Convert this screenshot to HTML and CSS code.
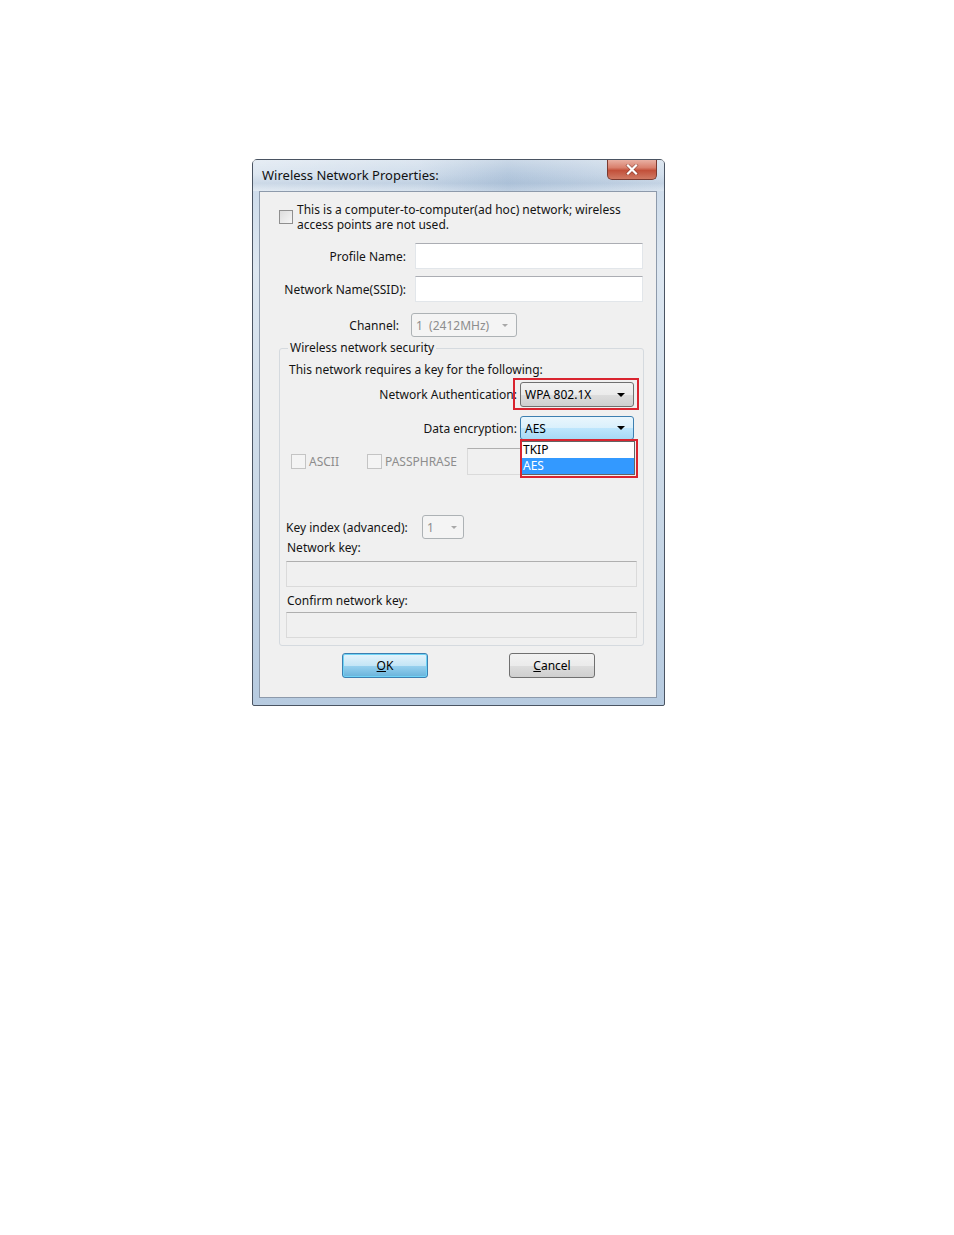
FILE: index.html
```html
<!DOCTYPE html>
<html>

<head>
    <link rel="stylesheet" href="styles.css">
</head>

<body>
    <div class="dialog">
        <!-- Title bar -->
        <div class="titlebar">
            <span class="title">Wireless Network Properties:</span>
            <div class="close-btn">
                <svg width="14" height="11" viewBox="0 0 14 11">
                    <path d="M3 1.5 L11 9.5 M11 1.5 L3 9.5" stroke="#5a2018" stroke-width="3.6" stroke-linecap="square" opacity="0.45" />
                    <path d="M3 1.5 L11 9.5 M11 1.5 L3 9.5" stroke="#fff" stroke-width="2.2" stroke-linecap="square" />
                </svg>
            </div>
        </div>

        <div class="client">
            <div class="adhoc-row">
                <span class="checkbox"></span>
                <span class="adhoc-text">This is a computer-to-computer(ad hoc) network; wireless<br>access points are not used.</span>
            </div>

            <div class="field-row profile-row">
                <label class="field-label">Profile Name:</label>
                <input type="text" class="text-input">
            </div>

            <div class="field-row ssid-row">
                <label class="field-label">Network Name(SSID):</label>
                <input type="text" class="text-input">
            </div>

            <div class="channel-row">
                <label class="channel-label">Channel:</label>
                <div class="combo disabled channel-combo">
                    <span>1 &nbsp;(2412MHz)</span>
                    <span class="arrow"></span>
                </div>
            </div>

            <!-- Security group -->
            <fieldset class="security">
                <legend>Wireless network security</legend>
                <div class="requires">This network requires a key for the following:</div>

                <div class="pick-row auth-row">
                    <label>Network Authentication:</label>
                    <div class="combo auth-combo marked">
                        <span>WPA 802.1X</span>
                        <span class="arrow"></span>
                    </div>
                </div>

                <div class="pick-row enc-row">
                    <label>Data encryption:</label>
                    <div class="combo focused enc-combo">
                        <span>AES</span>
                        <span class="arrow"></span>
                        <!-- open list -->
                        <div class="droplist">
                            <div class="option">TKIP</div>
                            <div class="option selected">AES</div>
                        </div>
                    </div>
                </div>

                <div class="key-type-row">
                    <span class="checkbox dim"></span>
                    <span class="dim-label">ASCII</span>
                    <span class="checkbox dim pass-box"></span>
                    <span class="dim-label">PASSPHRASE</span>
                    <input type="text" class="text-input disabled pass-input" disabled>
                </div>

                <div class="keyindex-row">
                    <label>Key index (advanced):</label>
                    <div class="combo disabled keyindex-combo">
                        <span>1</span>
                        <span class="arrow"></span>
                    </div>
                </div>

                <div class="key-label">Network key:</div>
                <input type="text" class="text-input disabled wide-input" disabled>

                <div class="key-label confirm-label">Confirm network key:</div>
                <input type="text" class="text-input disabled wide-input confirm-input" disabled>
            </fieldset>

            <div class="buttons">
                <div class="button default"><u>O</u>K</div>
                <div class="button"><u>C</u>ancel</div>
            </div>
        </div>
    </div>
</body>

</html>
```
FILE: styles.css
```css
body {
    margin: 0;
    padding: 159px 0 0 252px;
    background-color: #fff;
    font-family: "Noto Sans", "Open Sans", sans-serif;
    font-size: 12px;
    color: #141414;
}

.dialog {
    width: 411px;
    height: 545px;
    border: 1px solid #4a5462;
    border-radius: 5px 5px 2px 2px;
    background: linear-gradient(180deg, #c9d8e8 0%, #dde7f1 20%, #cbd9e7 60%, #b7cbe0 100%);
    box-sizing: content-box;
    display: flex;
    flex-direction: column;
}

.titlebar {
    height: 31px;
    display: flex;
    align-items: flex-start;
    justify-content: space-between;
    background:
        linear-gradient(180deg, rgba(255, 255, 255, 0.3) 0%, rgba(255, 255, 255, 0) 45%, rgba(120, 150, 185, 0.18) 75%, rgba(255, 255, 255, 0.1) 100%),
        linear-gradient(90deg, rgba(255, 255, 255, 0.35) 0%, rgba(255, 255, 255, 0.1) 40%, rgba(140, 168, 200, 0.35) 62%, rgba(255, 255, 255, 0.15) 100%);
}

.title {
    margin: 6px 0 0 9px;
    font-size: 13px;
    color: #111;
}

.close-btn {
    width: 48px;
    height: 19px;
    margin-right: 7px;
    border: 1px solid #7a3a30;
    border-top: none;
    border-radius: 0 0 5px 5px;
    background: linear-gradient(180deg, #e9b0a3 0%, #d9806d 40%, #c2503a 55%, #d07a64 100%);
    display: flex;
    align-items: center;
    justify-content: center;
}

.client {
    margin: 0 7px 0 6px;
    height: 507px;
    border: 1px solid #8d9aab;
    background-color: #f0f0f0;
    padding-top: 10px;
    box-sizing: border-box;
}

/* checkbox look */
.checkbox {
    display: inline-block;
    width: 12px;
    height: 12px;
    border: 1px solid #8f8f8f;
    background: linear-gradient(135deg, #dcdcdc 0%, #f6f6f6 100%);
    flex-shrink: 0;
}

.checkbox.dim {
    width: 13px;
    height: 13px;
    border-color: #c4c4c4;
    background: #f4f4f4;
}

.adhoc-row {
    display: flex;
    align-items: center;
    padding-left: 19px;
    height: 30px;
}

.adhoc-text {
    margin-left: 4px;
    line-height: 15px;
}

.field-row {
    display: flex;
    align-items: center;
    height: 26px;
}

.profile-row {
    margin-top: 11px;
}

.ssid-row {
    margin-top: 7px;
}

.field-label {
    width: 146px;
    text-align: right;
    margin-right: 9px;
}

.text-input {
    width: 228px;
    height: 26px;
    box-sizing: border-box;
    border: 1px solid #e2e6ea;
    border-top-color: #abadb3;
    background: #fff;
    margin: 0;
    padding: 0;
}

.text-input.disabled {
    background: #f0f0f0;
    border-color: #dadada;
    border-top-color: #afafaf;
}

.channel-row {
    display: flex;
    align-items: center;
    margin-top: 11px;
    height: 24px;
}

.channel-label {
    width: 139px;
    text-align: right;
    margin-right: 12px;
}

/* combo boxes */
.combo {
    position: relative;
    height: 24px;
    box-sizing: border-box;
    border: 1px solid #707070;
    border-radius: 3px;
    background: linear-gradient(180deg, #f2f2f2 0%, #ebebeb 50%, #dddddd 51%, #cfcfcf 100%);
    display: flex;
    align-items: center;
    justify-content: space-between;
    padding: 0 8px 0 4px;
    color: #000;
}

.combo .arrow {
    width: 0;
    height: 0;
    border-left: 4px solid transparent;
    border-right: 4px solid transparent;
    border-top: 4px solid #000;
}

.combo.disabled {
    border-color: #adb2b5;
    background: #f4f4f4;
    color: #8d8d8d;
}

.combo.disabled .arrow {
    border-top-color: #a8a8a8;
    border-left-width: 3px;
    border-right-width: 3px;
    border-top-width: 3px;
}

.combo.focused {
    border-color: #3c7fb1;
    background: linear-gradient(180deg, #eaf6fd 0%, #d9f0fc 50%, #bee6fd 51%, #a7d9f5 100%);
}

.channel-combo {
    width: 106px;
}

.security {
    margin: 3px 12px 0 19px;
    padding: 0 6px 7px 6px;
    border: 1px solid #d5dadf;
    border-radius: 3px;
}

.security legend {
    margin-left: 2px;
    padding: 0 2px;
    line-height: 16px;
}

.requires {
    margin: 6px 0 0 3px;
    line-height: 15px;
}

.pick-row {
    display: flex;
    align-items: center;
    justify-content: flex-end;
    margin-right: 3px;
}

.pick-row label {
    margin-right: 3px;
}

.auth-row {
    margin-top: 5px;
}

.auth-combo {
    width: 114px;
    height: 25px;
}

.enc-row {
    margin-top: 9px;
    position: relative;
    z-index: 2;
}

.enc-combo {
    width: 114px;
}

/* red annotation boxes drawn over the controls */
.marked::after {
    content: "";
    position: absolute;
    left: -8px;
    top: -5px;
    right: -6px;
    bottom: -4px;
    border: 2px solid #d9242f;
}

.droplist {
    position: absolute;
    left: 0;
    top: 24px;
    width: 114px;
    border: 1px solid #646464;
    background: #fff;
    box-sizing: border-box;
}

.droplist::after {
    content: "";
    position: absolute;
    left: -2px;
    top: -3px;
    right: -4px;
    bottom: -4px;
    border: 2px solid #d9242f;
}

.option {
    height: 16px;
    line-height: 16px;
    padding-left: 1px;
    color: #000;
}

.option.selected {
    background: #3399ff;
    color: #fff;
}

.key-type-row {
    display: flex;
    align-items: center;
    height: 27px;
    margin: 8px 0 0 5px;
}

.dim-label {
    color: #8d8d8d;
    margin-left: 3px;
}

.pass-box {
    margin-left: 28px;
}

.pass-input {
    width: 166px;
    height: 27px;
    margin-left: 10px;
}

.keyindex-row {
    display: flex;
    align-items: center;
    margin-top: 40px;
    height: 24px;
}

.keyindex-row label {
    width: 128px;
    margin-right: 8px;
}

.keyindex-combo {
    width: 42px;
    padding-right: 6px;
}

.key-label {
    margin: 1px 0 0 1px;
    line-height: 15px;
}

.wide-input {
    width: 351px;
    margin-top: 6px;
    display: block;
}

.confirm-label {
    margin-top: 6px;
}

.confirm-input {
    margin-top: 4px;
}

.buttons {
    display: flex;
    margin-top: 7px;
    padding-left: 82px;
    gap: 81px;
}

.button {
    width: 86px;
    height: 25px;
    box-sizing: border-box;
    border: 1px solid #707070;
    border-radius: 3px;
    background: linear-gradient(180deg, #f2f2f2 0%, #ebebeb 50%, #dddddd 51%, #cfcfcf 100%);
    display: flex;
    align-items: center;
    justify-content: center;
    color: #000;
}

.button.default {
    border-color: #3c7fb1;
    background: linear-gradient(180deg, #e5f4fc 0%, #c4e5f6 50%, #98d1ef 51%, #68b3db 100%);
    box-shadow: inset 0 0 0 1px #6fd3f5;
}
```
